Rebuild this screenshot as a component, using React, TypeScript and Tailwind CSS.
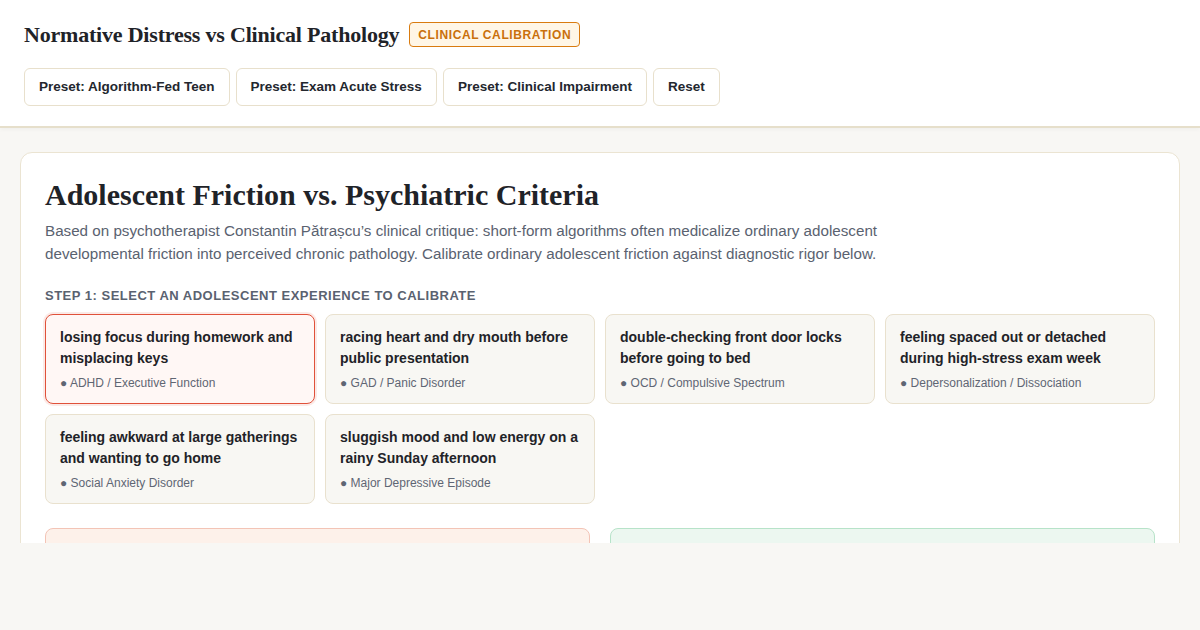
import React, { useState } from 'react';

interface Experience {
  id: string;
  text: string;
  label: string;
}

const experiences: Experience[] = [
  { id: 'focus', text: 'losing focus during homework and misplacing keys', label: 'ADHD / Executive Function' },
  { id: 'heart', text: 'racing heart and dry mouth before public presentation', label: 'GAD / Panic Disorder' },
  { id: 'locks', text: 'double-checking front door locks before going to bed', label: 'OCD / Compulsive Spectrum' },
  { id: 'spaced', text: 'feeling spaced out or detached during high-stress exam week', label: 'Depersonalization / Dissociation' },
  { id: 'awkward', text: 'feeling awkward at large gatherings and wanting to go home', label: 'Social Anxiety Disorder' },
  { id: 'sluggish', text: 'sluggish mood and low energy on a rainy Sunday afternoon', label: 'Major Depressive Episode' },
];

const presets = ['Preset: Algorithm-Fed Teen', 'Preset: Exam Acute Stress', 'Preset: Clinical Impairment', 'Reset'];

const serif = "font-['Liberation_Serif',Georgia,serif]";

const App = () => {
  const [selected, setSelected] = useState('focus');

  return (
    <div className="h-[630px] bg-[#f8f7f4] font-['Liberation_Sans',Arial,sans-serif] text-[#1f2328]">
      <div className="h-[543px] overflow-hidden">
        <header className="bg-white border-b-2 border-[#e6dfcb] px-6 pt-[18px] pb-5 shadow-[0_2px_4px_rgba(0,0,0,0.03)]">
          <div className="flex items-center gap-2.5">
            <h1 className={`${serif} text-[22px] font-bold tracking-[-0.2px] text-[#1f2328]`}>
              Normative Distress vs Clinical Pathology
            </h1>
            <span className="border border-[#d97b0f] bg-[#fff6e6] text-[#c9700c] text-[12px] font-bold tracking-[0.6px] rounded px-2 h-[25px] flex items-center">
              CLINICAL CALIBRATION
            </span>
          </div>
          <div className="flex gap-1.5 mt-[17px]">
            {presets.map((p) => (
              <button
                key={p}
                className="h-[38px] px-[14px] bg-white border border-[#e8e0cc] rounded-md text-[13.5px] font-bold text-[#23272e]"
              >
                {p}
              </button>
            ))}
          </div>
        </header>

        <main className="px-5 pt-6">
          <section className="bg-white border border-[#ebe4d2] rounded-xl px-6 pt-6 pb-6">
            <h2 className={`${serif} text-[30px] leading-[36px] font-bold text-[#1f2328]`}>
              Adolescent Friction vs. Psychiatric Criteria
            </h2>
            <p className="mt-[6px] max-w-[870px] text-[15.2px] leading-[23px] text-[#5a6270]">
              Based on psychotherapist Constantin Pătrașcu’s clinical critique: short-form algorithms often medicalize ordinary adolescent developmental friction into perceived chronic pathology. Calibrate ordinary adolescent friction against diagnostic rigor below.
            </p>

            <div className="mt-[21px] text-[13px] font-bold tracking-[0.5px] text-[#5a6270] uppercase">
              Step 1: Select an adolescent experience to calibrate
            </div>
            <div className="grid grid-cols-4 gap-2.5 mt-[8px]">
              {experiences.map((e) => {
                const active = selected === e.id;
                return (
                  <button
                    key={e.id}
                    onClick={() => setSelected(e.id)}
                    className={`text-left rounded-lg border pl-[14px] pr-[12px] pt-[12px] pb-[12px] ${
                      active
                        ? 'border-[#e0513a] bg-[#fff7f5] shadow-[0_0_0_2px_rgba(224,81,58,0.12)]'
                        : 'border-[#e9e1ce] bg-[#f8f7f3]'
                    }`}
                  >
                    <div className="text-[14px] leading-[21px] font-bold text-[#1f2328]">{e.text}</div>
                    <div className="mt-[6px] text-[12px] leading-[16px] text-[#5f6673]">● {e.label}</div>
                  </button>
                );
              })}
            </div>

            <div className="grid grid-cols-2 gap-5 mt-6">
              <div className="h-[200px] rounded-lg border border-[#f3c4b6] bg-[#fdf1ea]" />
              <div className="h-[200px] rounded-lg border border-[#b7e3c9] bg-[#ecf7f0]" />
            </div>
          </section>
        </main>
      </div>
    </div>
  );
};

export default App;
